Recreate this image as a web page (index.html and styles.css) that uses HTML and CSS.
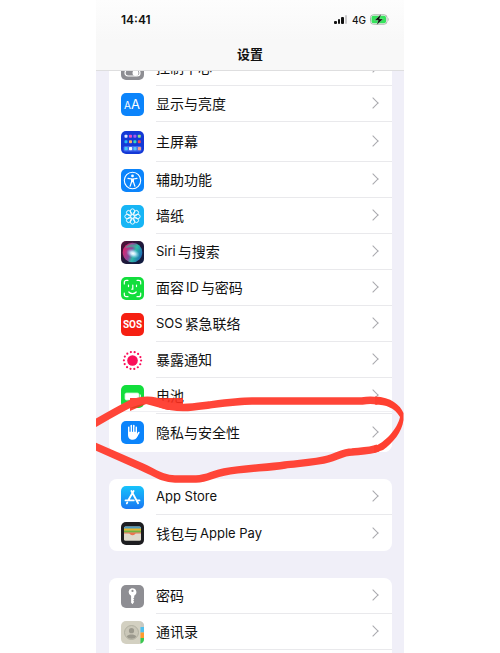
FILE: index.html
```html
<!DOCTYPE html>
<html lang="zh-CN">

<head>
  <meta charset="UTF-8" />
  <meta name="viewport" content="width=device-width, initial-scale=1.0" />
  <title>设置</title>
  <link rel="stylesheet" href="styles.css">
</head>

<body>

  <div class="phone">
    <header class="top">
      <div class="status-bar">
        <span class="time">14:41</span>
        <div class="status-right">
          <svg width="14" height="9" viewBox="0 0 14 9">
            <rect x="0" y="6" width="3" height="3" rx="1" fill="#111" />
            <rect x="4" y="4" width="2" height="5" rx="1" fill="#111" />
            <rect x="7" y="2" width="3" height="7" rx="1" fill="#111" />
            <rect x="11" y="0" width="2" height="9" rx="1" fill="#c9c9cb" />
          </svg>
          <span class="network">4G</span>
          <svg width="20" height="11" viewBox="0 0 20 11">
            <rect x=".5" y=".8" width="16.5" height="9.4" rx="2.8" fill="#fff" stroke="#a9b3aa" />
            <rect x="1.5" y="1.8" width="14.5" height="7.4" rx="1.8" fill="#35e35b" />
            <path d="M18.3 4v3c.9-.3.9-2.7 0-3z" fill="#a9b3aa" />
            <path d="M11.2 0 4.6 6.3h3.7L6.600 11l6.600-6.100H9.500z" fill="#111" stroke="#d9f8df" stroke-width=".3" />
          </svg>
        </div>
      </div>
      <h1>设置</h1>
    </header>

    <main>
      <nav class="group group-first">
        <a href="#" class="row">
          <svg class="icon" viewBox="0 0 23 23">
            <rect width="23" height="23" rx="5" fill="#8e8e93" />
            <rect x="4" y="4" width="15" height="6" rx="3" fill="none" stroke="#fff" stroke-width="1.2" />
            <rect x="4" y="13" width="15" height="6" rx="3" fill="none" stroke="#fff" stroke-width="1.2" />
            <circle cx="14.5" cy="16" r="3" fill="#fff" />
          </svg>
          <span class="label">控制中心</span>
        </a>
        <a href="#" class="row">
          <svg class="icon" viewBox="0 0 23 23">
            <rect width="23" height="23" rx="5" fill="#0b84fb" />
            <text x="3" y="16" font-size="10" fill="#fff">A</text>
            <text x="10" y="16" font-size="13" fill="#fff">A</text>
          </svg>
          <span class="label">显示与亮度</span>
        </a>
        <a href="#" class="row row-tall">
          <svg class="icon" viewBox="0 0 23 23">
            <rect width="23" height="23" rx="5" fill="#1439d6" />
            <g>
              <rect x="3.5" y="3.7" width="3" height="3" rx=".8" fill="#dfe9ff" />
              <rect x="8" y="3.7" width="3" height="3" rx=".8" fill="#e74cc0" />
              <rect x="12.4" y="3.7" width="3" height="3" rx=".8" fill="#a65af2" />
              <rect x="16.8" y="3.7" width="3" height="3" rx=".8" fill="#8fe08a" />
              <rect x="3.5" y="9.3" width="3" height="3" rx=".8" fill="#23b8f5" />
              <rect x="8" y="9.3" width="3" height="3" rx=".8" fill="#ffa768" />
              <rect x="12.4" y="9.3" width="3" height="3" rx=".8" fill="#35d6c0" />
              <rect x="16.8" y="9.3" width="3" height="3" rx=".8" fill="#f04a55" />
            </g>
            <rect x="2.5" y="15" width="18" height="5.5" rx="1.6" fill="#4168ee" />
            <rect x="3.5" y="16" width="3.2" height="3.2" rx=".8" fill="#42c8f5" />
            <rect x="8" y="16" width="3.2" height="3.2" rx=".8" fill="#f4fbff" />
            <rect x="12.4" y="16" width="3.2" height="3.2" rx=".8" fill="#54c5f7" />
            <rect x="16.8" y="16" width="3.2" height="3.2" rx=".8" fill="#f3a08c" />
          </svg>
          <span class="label">主屏幕</span>
        </a>
        <a href="#" class="row">
          <svg class="icon" viewBox="0 0 23 23">
            <rect width="23" height="23" rx="5" fill="#0b84fb" />
            <circle cx="11.5" cy="11.5" r="8.2" fill="none" stroke="#fff" stroke-width="1.1" />
            <circle cx="11.5" cy="6.9" r="1.4" fill="#fff" />
            <path d="M7 9.3l3.6.7v2.7l-1.5 4.5M16 9.3l-3.6.7v2.7l1.5 4.5" fill="none" stroke="#fff" stroke-width="1.2" stroke-linecap="round" stroke-linejoin="round" />
            <path d="M10.2 9.6h2.6v3.6h-2.6z" fill="#fff" />
          </svg>
          <span class="label">辅助功能</span>
        </a>
        <a href="#" class="row">
          <svg class="icon" viewBox="0 0 23 23">
            <rect width="23" height="23" rx="5" fill="#17b5f5" />
            <g fill="none" stroke="#fff" stroke-width=".9">
              <circle cx="11.5" cy="11.5" r="1.8" />
              <ellipse cx="11.5" cy="6.6" rx="2.2" ry="2.8" />
              <ellipse cx="11.5" cy="6.6" rx="2.2" ry="2.8" transform="rotate(45 11.5 11.5)" />
              <ellipse cx="11.5" cy="6.6" rx="2.2" ry="2.8" transform="rotate(90 11.5 11.5)" />
              <ellipse cx="11.5" cy="6.6" rx="2.2" ry="2.8" transform="rotate(135 11.5 11.5)" />
              <ellipse cx="11.5" cy="6.6" rx="2.2" ry="2.8" transform="rotate(180 11.5 11.5)" />
              <ellipse cx="11.5" cy="6.6" rx="2.2" ry="2.8" transform="rotate(225 11.5 11.5)" />
              <ellipse cx="11.5" cy="6.6" rx="2.2" ry="2.8" transform="rotate(270 11.5 11.5)" />
              <ellipse cx="11.5" cy="6.6" rx="2.2" ry="2.8" transform="rotate(315 11.5 11.5)" />
            </g>
          </svg>
          <span class="label">墙纸</span>
        </a>
        <a href="#" class="row">
          <svg class="icon" viewBox="0 0 23 23">
            <defs>
              <linearGradient id="siriBg" x1="0" y1="0" x2="1" y2="1">
                <stop offset="0" stop-color="#5a1238" />
                <stop offset=".5" stop-color="#20183a" />
                <stop offset="1" stop-color="#0d1c40" />
              </linearGradient>
              <linearGradient id="siriBall" x1="0" y1=".3" x2="1" y2=".7">
                <stop offset="0" stop-color="#e5216b" />
                <stop offset=".4" stop-color="#8b4a9b" />
                <stop offset=".6" stop-color="#2fb9a8" />
                <stop offset="1" stop-color="#1c62b5" />
              </linearGradient>
              <radialGradient id="siriGlow">
                <stop offset="0" stop-color="#fff" />
                <stop offset=".35" stop-color="#cfeeff" stop-opacity=".9" />
                <stop offset="1" stop-color="#7fd6f5" stop-opacity="0" />
              </radialGradient>
            </defs>
            <rect width="23" height="23" rx="5" fill="url(#siriBg)" />
            <circle cx="11.5" cy="11.5" r="9.8" fill="url(#siriBall)" />
            <path d="M4 7c4-5 11-5 14 1-4-2-8-2-14-1z" fill="#35c69a" opacity=".55" />
            <ellipse cx="12" cy="12.5" rx="7" ry="4.5" fill="url(#siriGlow)" transform="rotate(20 12 12.5)" />
          </svg>
          <span class="label"><span class="latin">Siri</span> 与搜索</span>
        </a>
        <a href="#" class="row">
          <svg class="icon" viewBox="0 0 23 23">
            <rect width="23" height="23" rx="5" fill="#12de3c" />
            <g fill="none" stroke="#fff" stroke-width="1.2" stroke-linecap="round">
              <path d="M3.3 7V5.3a2 2 0 0 1 2-2H7M16 3.3h1.7a2 2 0 0 1 2 2V7M19.7 16v1.7a2 2 0 0 1-2 2H16M7 19.7H5.3a2 2 0 0 1-2-2V16" />
              <path d="M7.5 8v1.6M15.5 8v1.6M11.8 8v4.2h-1M7.8 15c2 2.2 5.4 2.2 7.4 0" />
            </g>
          </svg>
          <span class="label">面容 <span class="latin">ID</span> 与密码</span>
        </a>
        <a href="#" class="row">
          <svg class="icon" viewBox="0 0 23 23">
            <rect width="23" height="23" rx="5" fill="#f61f12" />
            <text class="sos" x="11.5" y="15" text-anchor="middle" fill="#fff">SOS</text>
          </svg>
          <span class="label"><span class="latin">SOS</span> 紧急联络</span>
        </a>
        <a href="#" class="row">
          <svg class="icon" viewBox="0 0 23 23">
            <circle cx="11.5" cy="11.5" r="5.3" fill="#fa0f5a" />
            <circle cx="11.5" cy="11.5" r="8.6" fill="none" stroke="#fa0f5a" stroke-width="2.2" stroke-linecap="round" stroke-dasharray="0 3.86" />
          </svg>
          <span class="label">暴露通知</span>
        </a>
        <a href="#" class="row">
          <svg class="icon" viewBox="0 0 23 23">
            <rect width="23" height="23" rx="5" fill="#12de3c" />
            <rect x="4" y="8" width="14" height="7" rx="1.5" fill="#fff" stroke="#c5f7cf" stroke-width=".8" />
            <path d="M19.3 10v3" stroke="#fff" stroke-linecap="round" />
          </svg>
          <span class="label">电池</span>
        </a>
        <a href="#" class="row row-privacy">
          <svg class="icon" viewBox="0 0 23 23">
            <rect width="23" height="23" rx="5" fill="#0b84fb" />
            <g fill="none" stroke="#fff" stroke-width="1.6" stroke-linecap="round">
              <path d="M7.8 12V6.2M10.3 11V4.5M12.8 11V4.5M15.2 12V6.2M16 14.5l1.8-3" />
            </g>
            <path d="M7 10.5h9v3.2l1.2-.6c-.6 3.3-2.2 5.6-5.2 5.6-3.4 0-5-2-5-5.3z" fill="#fff" />
            <path d="M9.05 6v5M11.55 5.5V11M14 6v5" stroke="#0b84fb" stroke-width=".6" />
          </svg>
          <span class="label">隐私与安全性</span>
        </a>
      </nav>

      <nav class="group">
        <a href="#" class="row">
          <svg class="icon" viewBox="0 0 23 23">
            <defs>
              <linearGradient id="storeBg" x1="0" y1="0" x2="0" y2="1">
                <stop offset="0" stop-color="#17c3fb" />
                <stop offset="1" stop-color="#1a78f3" />
              </linearGradient>
            </defs>
            <rect width="23" height="23" rx="5" fill="url(#storeBg)" />
            <g stroke="#fff" stroke-width="1.8" stroke-linecap="round">
              <path d="M12.6 5 7.3 14.2M10.4 5l6.7 12.3M4.5 14.4h8.3M16.2 14.4h2.3M6.3 16.5l-.5.9" />
            </g>
          </svg>
          <span class="label"><span class="latin">App Store</span></span>
        </a>
        <a href="#" class="row">
          <svg class="icon" viewBox="0 0 23 23">
            <rect width="23" height="23" rx="5" fill="#1d1d20" />
            <rect x="3" y="4.5" width="17" height="14" rx="1.5" fill="#ded9cb" />
            <path d="M3 7V6a1.5 1.5 0 0 1 1.5-1.5h14A1.5 1.5 0 0 1 20 6v1z" fill="#4f9dc0" />
            <path d="M3 6.5h17v2.3H3z" fill="#e8b52b" />
            <path d="M3 8.5h17v2.3H3z" fill="#70b23f" />
            <path d="M3 10.5h17V12h-4.500c-1 0-2 2.500-4 2.500S8.500 12 7.500 12H3z" fill="#e9734f" />
            <path d="M3 11.5h5c1 0 1.5 1.8 3.5 1.8s2.5-1.800 3.500-1.800h5V17a1.5 1.5 0 0 1-1.5 1.5h-14A1.500 1.500 0 0 1 3 17z" fill="#ded9cb" />
          </svg>
          <span class="label">钱包与 <span class="latin">Apple Pay</span></span>
        </a>
      </nav>

      <nav class="group">
        <a href="#" class="row">
          <svg class="icon" viewBox="0 0 23 23">
            <rect width="23" height="23" rx="5" fill="#8e8e93" />
            <path d="M11.5 3.300a3.900 3.900 0 0 1 1.700 7.400v1.800l-1 1 1 1-1 1.200 1 1.100-1.700 2.400-1.400-1.500v-7a3.900 3.900 0 0 1 .4-7.400z" fill="#fff" />
            <circle cx="11.5" cy="5.9" r="1.1" fill="#8e8e93" />
          </svg>
          <span class="label">密码</span>
        </a>
        <a href="#" class="row">
          <svg class="icon" viewBox="0 0 23 23">
            <rect width="23" height="23" rx="5" fill="#d3d0c1" />
            <path d="M19.5.3A5 5 0 0 1 23 5v1h-3.500z" fill="#c8c9c2" />
            <path d="M19.5 6H23v5.500h-3.500z" fill="#4fc0ed" />
            <path d="M19.5 11.500H23V17h-3.500z" fill="#ff9a2e" />
            <path d="M19.5 17H23v1a5 5 0 0 1-3.500 4.700z" fill="#38c950" />
            <circle cx="10.5" cy="11.5" r="7" fill="#cac7b8" stroke="#aaa899" stroke-width=".8" />
            <circle cx="10.5" cy="9.7" r="2.6" fill="#9b998d" />
            <path d="M5.8 15.500c1.500-2.600 7.900-2.600 9.400 0-2 3-7.400 3-9.400 0z" fill="#9b998d" />
          </svg>
          <span class="label">通讯录</span>
        </a>
        <a href="#" class="row">
          <span class="icon"></span>
          <span class="label"></span>
        </a>
      </nav>
    </main>

    <!-- red marker around the privacy row -->
    <svg class="marker" viewBox="0 0 308 94" preserveAspectRatio="none">
      <path d="M34 8H87V20H72L50 14L34 21z" fill="#fb2f1f" opacity=".9" />
      <g fill="none" stroke="#ff4538">
        <path d="M-4 35C10 27 22 20 34 14C46 9 58 9 65 14C82 20 98 17 113 15C128 13 142 11 156 11H266C272 10 277 10 282 11" stroke-width="7.5" />
        <path d="M-4 55C14 63 32 71 46 77C58 82 66 89 79 89H100C112 89 116 84 128 82C150 78 170 78 189 75C206 73 222 72 232 69C242 66 248 62 256 62C266 61 274 61 282 58" stroke-width="7.5" />
      </g>
      <path d="M279 6.500C295 7 304 15 307.500 23V30C306 42 297 53 287 60L278 63V56C288 54 302 38 304 27C299 18 290 14.500 279 14.500z" fill="#ff4030" />
    </svg>
  </div>

</body>

</html>
```
FILE: styles.css
```css
* {
  box-sizing: border-box;
}

body {
  margin: 0;
  background: #fff;
  color: #111;
  font-family: Inter, "Noto Sans CJK SC", sans-serif;
}

.phone {
  position: relative;
  height: 100vh;
  margin: 0 96px;
  overflow: hidden;
  background: #f0eff8;
}

/* header */
.top {
  position: relative;
  z-index: 1;
  height: 71px;
  background: linear-gradient(#fdfdfd, #f8f8f8 40px);
  border-bottom: 1px solid #dededf;
}

.status-bar {
  display: flex;
  align-items: center;
  justify-content: space-between;
  height: 39px;
  padding: 0 14px 0 25px;
}

.time {
  font-size: 12px;
  font-weight: 600;
}

.status-right {
  display: flex;
  align-items: center;
  gap: 4px;
}

.network {
  font-size: 10px;
  font-weight: 500;
}

h1 {
  margin: 5px 0 0;
  font-size: 13px;
  font-weight: 700;
  line-height: 20px;
  text-align: center;
}

/* list */
.group {
  margin: 0 12px 27px 13px;
  overflow: hidden;
  background: #fff;
  border-radius: 8px;
}

/* scrolled a little under the header */
.group-first {
  margin-top: -21px;
}

.row {
  display: flex;
  align-items: center;
  height: 36px;
  padding-left: 12px;
  color: #111;
  text-decoration: none;
}

.row-tall {
  height: 40px;
}

.row-privacy {
  height: 41px;
  margin-top: -3px;
  background: #fff;
  border-top: 1px solid #f0f0f3;
}

.icon {
  flex: none;
  width: 23px;
  height: 23px;
  margin-right: 12px;
}

.sos {
  font-family: Roboto, sans-serif;
  font-size: 10px;
  font-weight: 700;
}

.label {
  display: flex;
  flex: 1;
  align-items: center;
  gap: 2px;
  height: 100%;
  padding-bottom: 1px;
  border-bottom: 1px solid #e9e9ec;
  font-size: 14px;
  white-space: nowrap;
}

.row:last-child .label {
  border-bottom: none;
}

.latin {
  font-size: 13px;
}

.label::after {
  content: "";
  width: 7px;
  height: 7px;
  margin: 0 15px 0 auto;
  border-top: 1px solid #a9a9ae;
  border-right: 1px solid #a9a9ae;
  transform: rotate(45deg);
}

.marker {
  position: absolute;
  top: 390px;
  left: 0;
  width: 100%;
  height: 94px;
}
```
